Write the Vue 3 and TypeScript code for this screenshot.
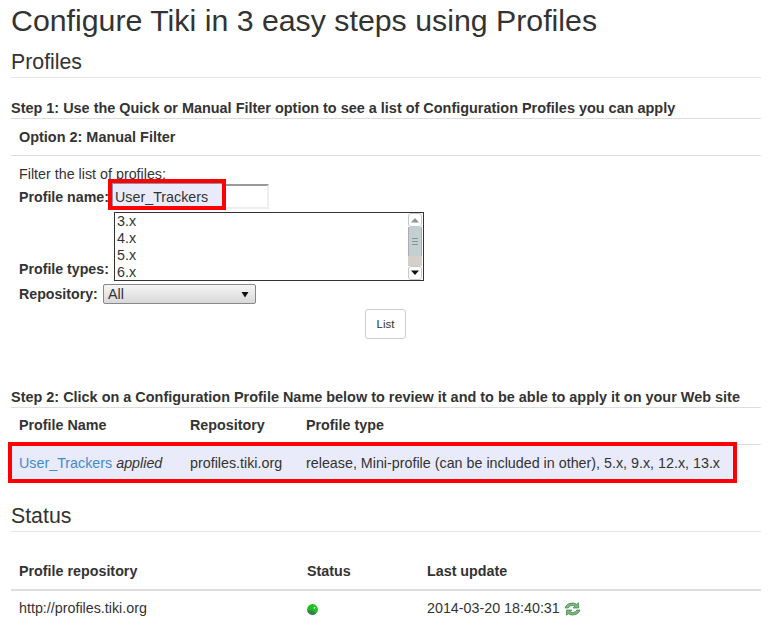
<script setup lang="ts">
const types: string[] = ['3.x', '4.x', '5.x', '6.x']
</script>

<template>
  <main class="page">
    <h1>Configure Tiki in 3 easy steps using Profiles</h1>
    <h2 class="section first">Profiles</h2>
    <h4 class="step step1">Step 1: Use the Quick or Manual Filter option to see a list of Configuration Profiles you can apply</h4>
    <div class="option">Option 2: Manual Filter</div>
    <form class="filter" @submit.prevent>
      <div class="hint">Filter the list of profiles:</div>
      <div class="name-row">
        <label>Profile name:</label>
        <div class="input-wrap">
          <input class="name-input" value="User_Trackers" />
          <div class="mark-input">User_Trackers</div>
        </div>
      </div>
      <div class="types-row">
        <label>Profile types:</label>
        <div class="listbox" role="listbox">
          <div class="options">
            <div v-for="t in types" :key="t" class="opt">{{ t }}</div>
          </div>
          <div class="scroll">
            <div class="sbtn">
              <svg width="10" height="6" viewBox="0 0 10 6"><path d="M1 5.500 5 1l4 4.500z" fill="#8f9698" /></svg>
            </div>
            <div class="thumb">
              <i></i><i></i><i></i>
            </div>
            <div class="track"></div>
            <div class="sbtn">
              <svg width="10" height="6" viewBox="0 0 10 6"><path d="M1 .5 5 5l4-4.500z" fill="#111" /></svg>
            </div>
          </div>
        </div>
      </div>
      <div class="repo-row">
        <label>Repository:</label>
        <div class="select">
          <span>All</span>
          <svg width="8" height="7" viewBox="0 0 8 7"><path d="M.5 1h7L4 6.500z" fill="#111" /></svg>
        </div>
      </div>
      <div class="btn-row"><button type="button" class="btn">List</button></div>
    </form>

    <h4 class="step step2">Step 2: Click on a Configuration Profile Name below to review it and to be able to apply it on your Web site</h4>
    <table class="t1">
      <thead>
        <tr><th class="c1">Profile Name</th><th class="c2">Repository</th><th>Profile type</th></tr>
      </thead>
      <tbody>
        <tr>
          <td colspan="3" class="row-cell">
            <div class="row-mark">
              <span class="c1"><a href="#" @click.prevent>User_Trackers</a> <em>applied</em></span>
              <span class="c2">profiles.tiki.org</span>
              <span>release, Mini-profile (can be included in other), 5.x, 9.x, 12.x, 13.x</span>
            </div>
          </td>
        </tr>
      </tbody>
    </table>

    <h2 class="section status">Status</h2>
    <table class="t2">
      <thead>
        <tr><th class="s1">Profile repository</th><th class="s2">Status</th><th>Last update</th></tr>
      </thead>
      <tbody>
        <tr>
          <td>http://profiles.tiki.org</td>
          <td>
            <svg class="dot" width="11" height="11" viewBox="0 0 11 11">
              <circle cx="5.500" cy="5.500" r="5.400" fill="#1cc01c" />
              <path d="M.2 6.200A5.400 5.400 0 0 0 9 9.600L5.500 6.500z" fill="#3d7a5a" />
              <circle cx="7.500" cy="3.800" r="1" fill="#c8f8c8" />
            </svg>
          </td>
          <td>
            2014-03-20 18:40:31
            <svg class="refresh" width="17" height="14" viewBox="0 0 17 14">
              <path d="M1 6C2 2.600 5 1 8.500 1c1.800 0 3 .5 4 1.300L14.500.8V6H9l1.800-1.800C10 3.700 9.300 3.500 8.500 3.500 6.300 3.500 5 4.500 4.200 6z" fill="#79b879" stroke="#3f7f4f" stroke-width=".7" />
              <path d="M16 8c-1 3.400-4 5-7.500 5-1.800 0-3-.5-4-1.300L2.500 13.200V8H8l-1.800 1.800c.8.500 1.500.7 2.300.7 2.200 0 3.500-1 4.300-2.500z" fill="#79b879" stroke="#3f7f4f" stroke-width=".7" />
            </svg>
          </td>
        </tr>
      </tbody>
    </table>
  </main>
</template>

<style scoped>
.page {
  box-sizing: border-box;
  width: 775px;
  height: 634px;
  overflow: hidden;
  padding: 0 14px 0 11px;
  font-family: "Liberation Sans", Arial, sans-serif;
  font-size: 14.300px;
  line-height: 20px;
  color: #333;
}
h1 {
  margin: 0;
  padding-top: 3px;
  font-size: 30.300px;
  line-height: 36px;
  font-weight: 400;
}
.section {
  margin: 0;
  font-size: 21.300px;
  line-height: 23px;
  font-weight: 400;
  border-bottom: 1px solid #e5e5e5;
}
.first {
  margin-top: 12px;
  padding-bottom: 3px;
}
.step {
  margin: 0;
  font-size: 14.450px;
  line-height: 20px;
  font-weight: 700;
  border-bottom: 1px solid #ddd;
}
.step1 {
  margin-top: 20px;
}
.option {
  padding: 8px;
  font-size: 14.450px;
  font-weight: 700;
  border-bottom: 1px solid #ddd;
}
.filter {
  padding: 8px 8px 0;
}
.hint {
  height: 20px;
}
label {
  font-weight: 700;
  font-size: 14.200px;
  flex: none;
}
.name-row {
  display: flex;
  align-items: center;
  height: 25px;
}
.name-row label {
  width: 90px;
}
.input-wrap {
  position: relative;
  margin-left: 3px;
  width: 157px;
  height: 25px;
}
.name-input {
  box-sizing: border-box;
  width: 100%;
  height: 100%;
  padding: 1px 3px;
  font: inherit;
  color: #333;
  background: #fff;
  border: 2px solid #eee;
  border-top-color: #999;
  border-left-color: #999;
  outline: none;
}
.mark-input {
  position: absolute;
  left: -4px;
  top: -5px;
  box-sizing: border-box;
  width: 118px;
  height: 31px;
  padding: 2px 2px 0 3px;
  line-height: 24px;
  background: #e9ebfb;
  border: 4px solid #f00;
  box-shadow: inset 1px 1px 0 0 #8f8fa8;
}
.types-row {
  display: flex;
  align-items: flex-end;
  margin-top: 3px;
}
.types-row label {
  width: 91px;
  padding-bottom: 2px;
}
.listbox {
  display: flex;
  box-sizing: border-box;
  margin-left: 4px;
  width: 310px;
  height: 69px;
  border: 1px solid #333;
  background: #fff;
}
.options {
  flex: 1;
  padding-left: 2px;
  overflow: hidden;
}
.opt {
  height: 17px;
  line-height: 17px;
}
.scroll {
  width: 14px;
  margin-right: 1px;
  display: flex;
  flex-direction: column;
  height: 100%;
}
.sbtn {
  height: 14px;
  flex: none;
  display: flex;
  align-items: center;
  justify-content: center;
  box-sizing: border-box;
  border: 1px solid #c4c9c9;
  border-radius: 3px;
  background: #fff;
}
.thumb {
  flex: none;
  height: 29px;
  background: #c3cfd0;
  border-left: 1px solid #aab;
  border-right: 1px solid #aab;
  box-sizing: border-box;
  display: flex;
  flex-direction: column;
  align-items: center;
  justify-content: center;
  gap: 2px;
}
.thumb i {
  display: block;
  width: 6px;
  height: 1px;
  background: #8a9293;
}
.track {
  flex: 1;
  background: #d5cfcb;
}
.repo-row {
  display: flex;
  align-items: center;
  margin-top: 3px;
  height: 20px;
}
.repo-row label {
  width: 80px;
}
.select {
  box-sizing: border-box;
  margin-left: 4px;
  width: 153px;
  height: 20px;
  display: flex;
  align-items: center;
  justify-content: space-between;
  padding: 0 6px 0 4px;
  border: 1px solid #888;
  border-radius: 2px;
  background: linear-gradient(#f5f5f5, #d9d9d9);
}
.btn-row {
  margin-top: 5px;
  padding-left: 346px;
}
.btn {
  box-sizing: border-box;
  width: 41px;
  height: 30px;
  padding: 0;
  font-family: inherit;
  font-size: 11.500px;
  color: #333;
  background: #fff;
  border: 1px solid #ccc;
  border-radius: 3px;
}
.step2 {
  margin-top: 48px;
}
table {
  width: 100%;
  border-collapse: collapse;
  table-layout: fixed;
}
th {
  box-sizing: border-box;
  text-align: left;
  font-weight: 700;
  line-height: 20px;
}
.t1 th.c1 { width: 171px; }
.t1 th.c2 { width: 116px; }
.t1 th {
  padding: 7px 8px 9px;
  border-bottom: 1px solid #ddd;
}
.row-cell {
  position: relative;
  padding: 0;
  height: 37px;
}
.row-mark {
  position: absolute;
  left: -3px;
  top: -3px;
  box-sizing: border-box;
  width: 729px;
  height: 41px;
  padding-left: 7px;
  display: flex;
  align-items: center;
  background: #e9ebfb;
  border: 4px solid #f00;
  white-space: nowrap;
}
.row-mark .c1 { width: 171px; flex: none; }
.row-mark .c2 { width: 116px; flex: none; }
a { color: #428bca; text-decoration: none; }
.status {
  margin-top: 23px;
  padding-bottom: 3px;
}
.t2 { margin-top: 21px; }
.t2 th {
  padding: 8px;
  border-bottom: 2px solid #ddd;
}
.t2 td { padding: 7px 8px; }
.t2 th.s1 { width: 288px; }
.t2 th.s2 { width: 120px; }
.dot { vertical-align: -2px; }
.refresh { vertical-align: -3px; }
</style>
